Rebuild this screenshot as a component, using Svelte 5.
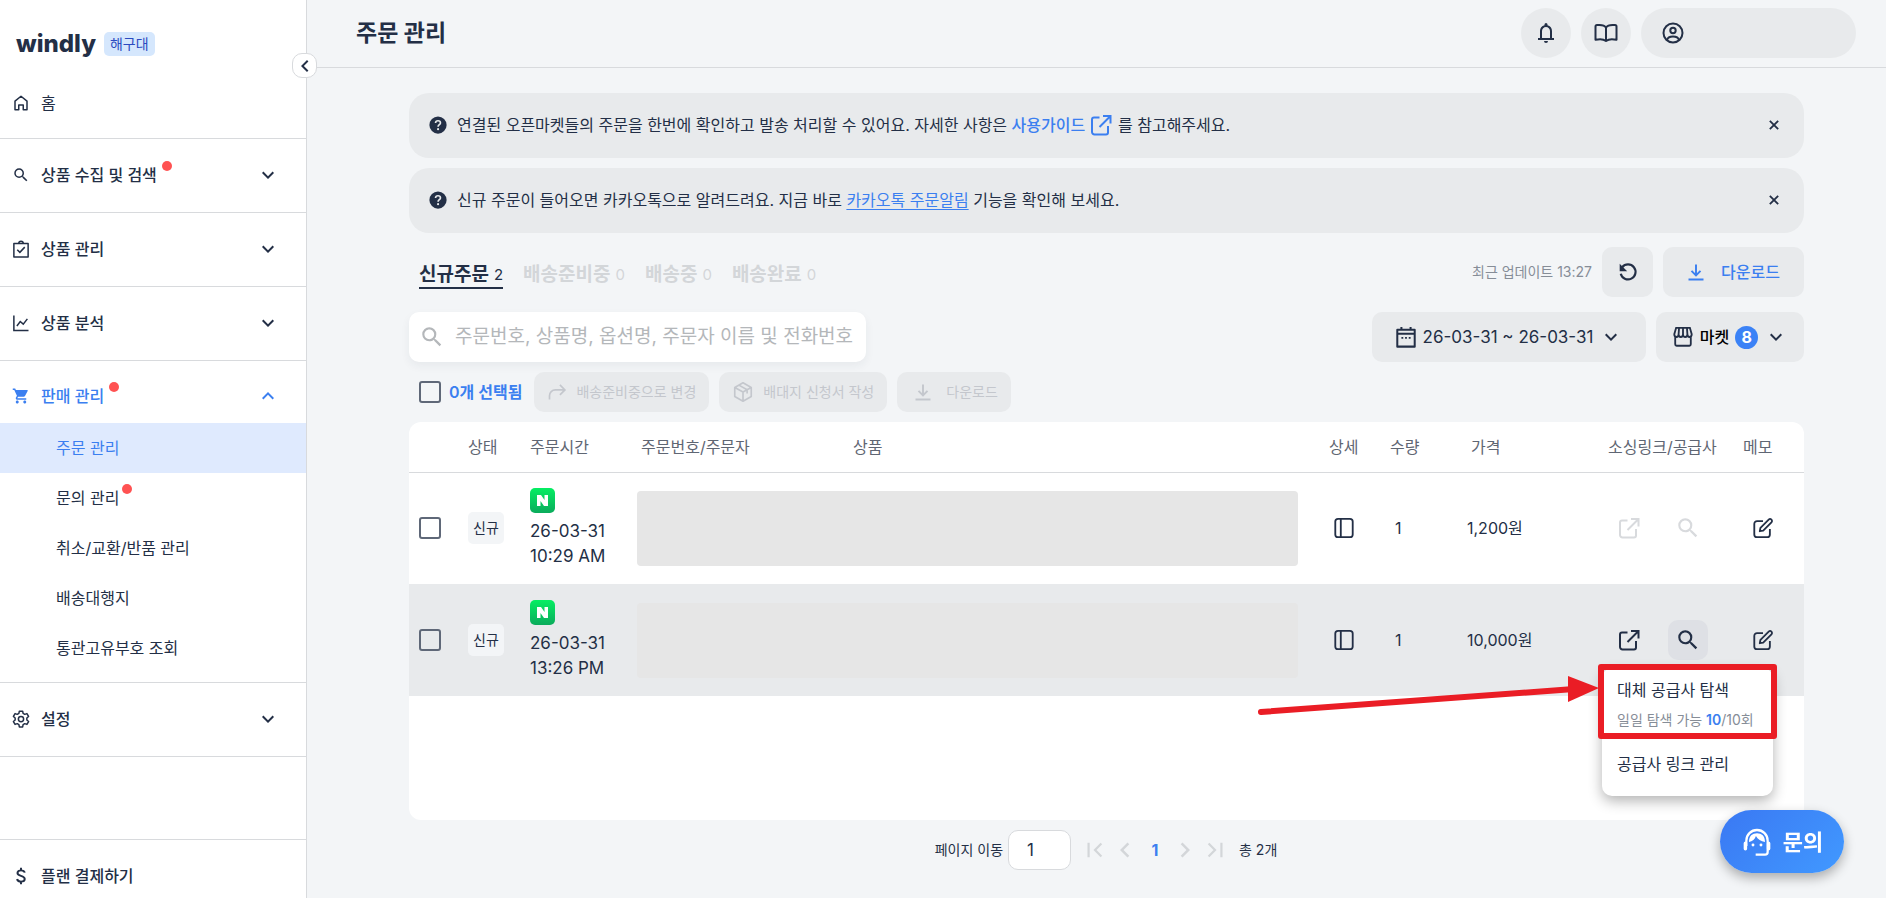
<script lang="ts">
  type MenuGroup = {
    id: string;
    icon: string;
    label: string;
    dot?: boolean;
    open?: boolean;
    children?: { label: string; dot?: boolean; active?: boolean }[];
  };

  const groups: MenuGroup[] = [
    { id: 'collect', icon: 'search', label: '상품 수집 및 검색', dot: true },
    { id: 'product', icon: 'clipboard', label: '상품 관리' },
    { id: 'analysis', icon: 'chart', label: '상품 분석' },
    {
      id: 'sales',
      icon: 'cart',
      label: '판매 관리',
      dot: true,
      open: true,
      children: [
        { label: '주문 관리', active: true },
        { label: '문의 관리', dot: true },
        { label: '취소/교환/반품 관리' },
        { label: '배송대행지' },
        { label: '통관고유부호 조회' },
      ],
    },
    { id: 'settings', icon: 'gear', label: '설정' },
  ];

  const tabs = [
    { label: '신규주문', count: 2 },
    { label: '배송준비중', count: 0 },
    { label: '배송중', count: 0 },
    { label: '배송완료', count: 0 },
  ];

  const orders = [
    { id: 1, date: '26-03-31', time: '10:29 AM', qty: 1, price: '1,200원', sourced: false },
    { id: 2, date: '26-03-31', time: '13:26 PM', qty: 1, price: '10,000원', sourced: true },
  ];

  let activeTab = $state(0);
  let keyword = $state('');
  let page = $state('1');
  let menuFor = $state(2);
  let notices = $state([true, true]);
</script>

{#snippet icon(name: string, size = 24)}
  <svg
    class="icon"
    width={size}
    height={size}
    viewBox="0 0 24 24"
    fill="none"
    stroke="currentColor"
    stroke-width="2"
    aria-hidden="true"
  >
    {#if name === 'search'}
      <path fill="currentColor" stroke="none" d="M15.5 14h-.79l-.28-.27A6.471 6.471 0 0 0 16 9.5 6.5 6.5 0 1 0 9.5 16c1.61 0 3.09-.59 4.23-1.57l.27.28v.79l5 4.99L20.49 19l-4.99-5zm-6 0C7.01 14 5 11.99 5 9.5S7.01 5 9.5 5 14 7.01 14 9.5 11.99 14 9.5 14z" />
    {:else if name === 'home'}
      <path d="M4 21V9.500L12 3l8 6.500V21h-5v-6.500H9V21z" stroke-linejoin="round" />
    {:else if name === 'clipboard'}
      <path d="M2.500 4.500h19v18h-19z" stroke-linejoin="round" />
      <path d="M9 4.500a3 3 0 0 1 6 0" />
      <path d="m7 13 3.500 3.500 6.500-7" />
    {:else if name === 'chart'}
      <path d="M2.500 2v20H22" />
      <path d="m6.500 16 4.500-6 4 3.500 5.500-7" />
    {:else if name === 'cart'}
      <path fill="currentColor" stroke="none" d="M7 18c-1.100 0-1.990.9-1.990 2S5.900 22 7 22s2-.9 2-2-.9-2-2-2zM1 2v2h2l3.600 7.590-1.350 2.450c-.16.28-.25.61-.25.96 0 1.100.9 2 2 2h12v-2H7.420c-.14 0-.25-.11-.25-.25l.03-.12.9-1.630h7.450c.75 0 1.410-.41 1.750-1.030l3.580-6.490A1.003 1.003 0 0 0 20 4H5.210l-.94-2H1zm16 16c-1.100 0-1.990.9-1.990 2s.89 2 1.990 2 2-.9 2-2-.9-2-2-2z" />
    {:else if name === 'gear'}
      <circle cx="12" cy="12" r="3.500" />
      <path d="M9.800 2.500h4.400l.6 3 2.200 1.300 2.900-1 2.200 3.800-2.300 2v2.800l2.300 2-2.200 3.800-2.900-1-2.200 1.300-.6 3H9.800l-.6-3L7 19.200l-2.900 1-2.200-3.800 2.300-2v-2.800l-2.300-2 2.200-3.800 2.900 1 2.200-1.300z" transform="translate(0 -1)" stroke-linejoin="round" />
    {:else if name === 'dollar'}
      <path d="M17 7.500c-.5-2-2.300-3-5-3s-4.700 1.200-4.700 3.500c0 5 9.700 2.500 9.700 8 0 2.300-2 3.500-5 3.500s-4.800-1.200-5.200-3.500M12 1v3.500M12 19.500V23" stroke-width="2.600" />
    {:else if name === 'down'}
      <path fill="currentColor" stroke="none" d="M7.410 8.590 12 13.170l4.590-4.580L18 10l-6 6-6-6z" />
    {:else if name === 'up'}
      <path fill="currentColor" stroke="none" d="M7.410 15.410 12 10.830l4.590 4.580L18 14l-6-6-6 6z" />
    {:else if name === 'left'}
      <path fill="currentColor" stroke="none" d="M15.410 7.410 14 6l-6 6 6 6 1.410-1.410L10.830 12z" />
    {:else if name === 'right'}
      <path fill="currentColor" stroke="none" d="M10 6 8.590 7.410 13.170 12l-4.580 4.590L10 18l6-6z" />
    {:else if name === 'first'}
      <path d="m19 5-7 7 7 7M5 4v16" stroke-width="2.400" />
    {:else if name === 'last'}
      <path d="m5 5 7 7-7 7M19 4v16" stroke-width="2.400" />
    {:else if name === 'bell'}
      <path fill="currentColor" stroke="none" d="M4 19v-2h2v-7c0-2.800 1.700-5.100 4.500-5.800V3.500a1.500 1.500 0 0 1 3 0v.7C16.300 4.900 18 7.200 18 10v7h2v2zm8 3a2 2 0 0 1-2-2h4a2 2 0 0 1-2 2zM8 17h8v-7c0-2.200-1.800-4-4-4s-4 1.800-4 4z" />
    {:else if name === 'book'}
      <path d="M12 6.500C10.800 4.700 8.500 4 5.500 4H3C2 4 1.500 4.500 1.500 5.500v13.300C5.500 17.800 9.500 18 12 20c2.500-2 6.500-2.200 10.500-1.200V5.500c0-1-.5-1.500-1.500-1.500h-2.500c-3 0-5.300.7-6.500 2.500zm0 0V20" stroke-linejoin="round" />
    {:else if name === 'user'}
      <circle cx="12" cy="12" r="9.500" />
      <circle cx="12" cy="9.500" r="2.700" />
      <path d="M6 19c.6-2.500 3-3.500 6-3.500s5.400 1 6 3.500" />
    {:else if name === 'help'}
      <circle cx="12" cy="12" r="11.500" fill="currentColor" stroke="none" />
      <path d="M8.700 9.300C8.800 7.400 10.100 6.300 12 6.300s3.300 1.200 3.300 2.900c0 2.300-3.200 2.600-3.200 5.100" stroke="#e8eaec" stroke-width="2.200" />
      <circle cx="12.100" cy="17.500" r="1.400" fill="#e8eaec" stroke="none" />
    {:else if name === 'close'}
      <path d="m7 7 10 10M17 7 7 17" stroke-width="2.200" />
    {:else if name === 'external'}
      <path d="M10.500 4.500H5A2 2 0 0 0 3 6.500V19a2.500 2.500 0 0 0 2.500 2.500H17a2 2 0 0 0 2-2V13" />
      <path d="M14 3h7.500v7.500M21 3.500 10.500 14" />
    {:else if name === 'refresh'}
      <path d="M5 6.300A9 9 0 1 1 3.300 14" stroke-width="2.600" />
      <path fill="currentColor" stroke="none" d="M2 2v9h9z" />
    {:else if name === 'download'}
      <path d="M12 2v14M6 10.500l6 6 6-6M2 22h20" stroke-width="2.600" />
    {:else if name === 'forward'}
      <path d="M3 21v-4.500a7 7 0 0 1 7-7h11M15.500 3.500l6 6-6 6" />
    {:else if name === 'box'}
      <path d="m12 2 9 5v10l-9 5-9-5V7zM3 7l9 5 9-5M12 12v10M7.500 4.500l9 5v4" stroke-linejoin="round" stroke-width="1.800" />
    {:else if name === 'calendar'}
      <path d="M2.500 4h19v18.500h-19zM2.500 8.500h19M7 1v3M17 1v3" stroke-width="2.200" stroke-linejoin="round" />
      <path d="M7 13h2m2 0h2m2 0h2" />
    {:else if name === 'market'}
      <path d="M4.500 2h15l2 7c0 4-4.700 4-4.700 0 0 4-4.800 4-4.800 0 0 4-4.800 4-4.800 0 0 4-4.700 4-4.700 0zM7.700 2l-.5 7M12 2v7M16.300 2l.5 7M3.500 12v8c0 1 .5 1.500 1.500 1.500h14c1 0 1.500-.5 1.500-1.500v-8" />
    {:else if name === 'panel'}
      <rect x="2.500" y="2" width="19" height="20" rx="3" />
      <path d="M8.500 2v20" />
    {:else if name === 'edit'}
      <path d="M12 4.500H5.500a3 3 0 0 0-3 3V19a3 3 0 0 0 3 3h11a3 3 0 0 0 3-3V13" />
      <path d="m8.500 15.500.7-3.700 9-9a2 2 0 0 1 3 3l-9 9z" stroke-linejoin="round" />
    {:else if name === 'agent'}
      <path d="M4 15V11a8 8 0 0 1 16 0v8.500a2 2 0 0 1-2 2h-7" stroke-width="1.700" />
      <path d="M3.300 13v4M20.700 13v4" stroke-width="2.600" stroke-linecap="round" />
      <path fill="currentColor" stroke="none" d="M6 12c0-4.600 2.500-6.600 6-6.600s6 2 6 6.600c-3-.5-5.500-2-6.800-4.500C10.500 10 8.500 11.500 6 12z" />
      <circle cx="9" cy="14.300" r="1.100" fill="currentColor" stroke="none" />
      <circle cx="15" cy="14.300" r="1.100" fill="currentColor" stroke="none" />
    {/if}
  </svg>
{/snippet}

<div class="app">
  <aside class="sidebar">
    <button class="collapse" aria-label="메뉴 접기">{@render icon('left', 24)}</button>
    <nav class="nav">
      <div class="brand">
        <a class="logo" href="#home">windly</a>
        <span class="plan">해구대</span>
      </div>
      <a class="entry home" href="#home">
        {@render icon('home', 18)}
        <span>홈</span>
      </a>

      {#each groups as group (group.id)}
        <section class="group">
          <button class="entry" class:open={group.open} aria-expanded={!!group.open}>
            {@render icon(group.icon, group.icon === 'search' ? 20 : 18)}
            <span class="with-dot" class:dot={group.dot}>{group.label}</span>
            <span class="arrow">{@render icon(group.open ? 'up' : 'down', 24)}</span>
          </button>
          {#if group.open && group.children}
            <ul class="children">
              {#each group.children as child}
                <li>
                  <a href="#{group.id}" class:active={child.active}>
                    <span class="with-dot near" class:dot={child.dot}>{child.label}</span>
                  </a>
                </li>
              {/each}
            </ul>
          {/if}
        </section>
      {/each}

      <div class="spacer"></div>
      <section class="group">
        <a class="entry" href="#plan">
          {@render icon('dollar', 18)}
          <span>플랜 결제하기</span>
        </a>
      </section>
    </nav>
  </aside>

  <main class="main">
    <header class="topbar">
      <h1>주문 관리</h1>
      <div class="top-actions">
        <button class="round" aria-label="알림">{@render icon('bell', 24)}</button>
        <button class="round" aria-label="가이드">{@render icon('book', 24)}</button>
        <button class="account" aria-label="내 계정">{@render icon('user', 24)}</button>
      </div>
    </header>

    <div class="content">
      <div class="notices">
        {#if notices[0]}
          <div class="notice">
            {@render icon('help', 18)}
            <p>
              연결된 오픈마켓들의 주문을 한번에 확인하고 발송 처리할 수 있어요. 자세한 사항은
              <a class="guide" href="#guide">사용가이드 {@render icon('external', 24)}</a>
              를 참고해주세요.
            </p>
            <button aria-label="닫기" onclick={() => (notices[0] = false)}>{@render icon('close', 20)}</button>
          </div>
        {/if}
        {#if notices[1]}
          <div class="notice">
            {@render icon('help', 18)}
            <p>
              신규 주문이 들어오면 카카오톡으로 알려드려요. 지금 바로
              <a href="#kakao">카카오톡 주문알림</a> 기능을 확인해 보세요.
            </p>
            <button aria-label="닫기" onclick={() => (notices[1] = false)}>{@render icon('close', 20)}</button>
          </div>
        {/if}
      </div>

      <div class="row tabs-row">
        <div class="tabs" role="tablist">
          {#each tabs as tab, i}
            <button role="tab" class:active={activeTab === i} aria-selected={activeTab === i} onclick={() => (activeTab = i)}>
              {tab.label}<span>{tab.count}</span>
            </button>
          {/each}
        </div>
        <div class="side">
          <span class="updated">최근 업데이트 13:27</span>
          <button class="box refresh" aria-label="새로고침">{@render icon('refresh', 20)}</button>
          <button class="box export">{@render icon('download', 18)}다운로드</button>
        </div>
      </div>

      <div class="row">
        <label class="search">
          {@render icon('search', 26)}
          <input
            type="text"
            bind:value={keyword}
            aria-label="주문 검색"
            placeholder="주문번호, 상품명, 옵션명, 주문자 이름 및 전화번호"
          />
        </label>
        <div class="side">
          <button class="box period">
            {@render icon('calendar', 22)}26-03-31 ~ 26-03-31{@render icon('down', 24)}
          </button>
          <button class="box market">
            {@render icon('market', 22)}<span>마켓</span><b>8</b>{@render icon('down', 24)}
          </button>
        </div>
      </div>

      <div class="bulk">
        <label><input type="checkbox" />0개 선택됨</label>
        <button disabled>{@render icon('forward', 20)}배송준비중으로 변경</button>
        <button disabled>{@render icon('box', 22)}배대지 신청서 작성</button>
        <button class="wide" disabled>{@render icon('download', 18)}다운로드</button>
      </div>

      <div class="sheet">
        <table>
          <colgroup>
            <col class="c-check" /><col class="c-state" /><col class="c-time" /><col class="c-no" /><col />
            <col class="c-detail" /><col class="c-qty" /><col class="c-price" /><col class="c-source" /><col class="c-memo" />
          </colgroup>
          <thead>
            <tr>
              <th></th>
              <th>상태</th>
              <th>주문시간</th>
              <th class="inset">주문번호/주문자</th>
              <th class="inset">상품</th>
              <th>상세</th>
              <th>수량</th>
              <th class="inset">가격</th>
              <th>소싱링크/공급사</th>
              <th>메모</th>
            </tr>
          </thead>
          <tbody>
            {#each orders as order (order.id)}
              <tr class:selected={menuFor === order.id}>
                <td class="check"><input type="checkbox" aria-label="주문 {order.id} 선택" /></td>
                <td><span class="state">신규</span></td>
                <td class="time">
                  <svg width="25" height="25" viewBox="0 0 25 25" aria-hidden="true">
                    <defs>
                      <linearGradient id="naver{order.id}" x1="0" y1="0" x2="0" y2="1">
                        <stop offset="0" stop-color="#05ee62" />
                        <stop offset="1" stop-color="#0bab5c" />
                      </linearGradient>
                    </defs>
                    <rect width="25" height="25" rx="5" fill="url(#naver{order.id})" />
                    <path d="M7 7h4l3.500 5V7h3.500v11h-4l-3.500-5v5H7z" fill="#fff" />
                  </svg>
                  <span>{order.date}</span>
                  <span>{order.time}</span>
                </td>
                <td colspan="2"><div class="masked"></div></td>
                <td><button class="tool" aria-label="상세 보기">{@render icon('panel', 22)}</button></td>
                <td class="qty">{order.qty}</td>
                <td>{order.price}</td>
                <td>
                  <div class="tools">
                    <button class="tool" aria-label="소싱링크" disabled={!order.sourced}>{@render icon('external', 24)}</button>
                    <div class="supplier">
                      <button
                        class="tool"
                        class:on={menuFor === order.id}
                        aria-label="공급사"
                        disabled={!order.sourced}
                        onclick={() => (menuFor = menuFor === order.id ? 0 : order.id)}
                      >
                        {@render icon('search', 26)}
                      </button>
                      {#if menuFor === order.id}
                        <div class="menu">
                          <button>
                            대체 공급사 탐색
                            <small>일일 탐색 가능 <b>10</b>/10회</small>
                          </button>
                          <button>공급사 링크 관리</button>
                          <div class="mark"></div>
                          <svg class="pointer" width="344" height="44" viewBox="0 0 344 44" aria-hidden="true">
                            <path d="M5 38 318 15" stroke="#ea1d25" stroke-width="6" stroke-linecap="round" />
                            <path d="M312 2v26l31-14z" fill="#ea1d25" />
                          </svg>
                        </div>
                      {/if}
                    </div>
                  </div>
                </td>
                <td><button class="tool memo" aria-label="메모">{@render icon('edit', 22)}</button></td>
              </tr>
            {/each}
          </tbody>
        </table>
      </div>

      <footer class="pager">
        <label>페이지 이동 <input type="text" bind:value={page} /></label>
        <div class="pages">
          <button aria-label="처음" disabled>{@render icon('first', 22)}</button>
          <button aria-label="이전" disabled>{@render icon('left', 30)}</button>
          <button class="current">1</button>
          <button aria-label="다음" disabled>{@render icon('right', 30)}</button>
          <button aria-label="마지막" disabled>{@render icon('last', 22)}</button>
        </div>
        <span>총 2개</span>
      </footer>
    </div>
  </main>

  <button class="inquiry">{@render icon('agent', 32)}문의</button>
</div>

<style>
  :global(body) {
    background: #f3f5f7;
  }

  .app {
    --ink: #232f46;
    --blue: #3b7ff0;
    --gray: #e8eaec;
    --line: #d8dadd;
    display: flex;
    height: 100vh;
    overflow: hidden;
    background: #f3f5f7;
    color: var(--ink);
    font-family: Inter, 'Noto Sans CJK KR', sans-serif;
    font-size: 16px;
    line-height: 24px;
  }

  .app :global(*) {
    box-sizing: border-box;
  }

  button,
  input {
    font: inherit;
    color: inherit;
  }

  button {
    display: flex;
    align-items: center;
    padding: 0;
    border: 0;
    background: none;
    cursor: pointer;
  }

  a {
    color: inherit;
    text-decoration: none;
  }

  .icon {
    display: block;
    flex: none;
  }

  /* sidebar */
  .sidebar {
    position: relative;
    flex: none;
    width: 307px;
    border-right: 1px solid var(--line);
    background: #fff;
  }

  .nav {
    display: flex;
    flex-direction: column;
    height: 100%;
    overflow-y: auto;
    scrollbar-width: none;
  }

  .collapse {
    position: absolute;
    top: 53px;
    right: -11px;
    z-index: 2;
    justify-content: center;
    width: 25px;
    height: 25px;
    border: 1px solid var(--line);
    border-radius: 10px;
    background: #fff;
  }

  .brand {
    display: flex;
    align-items: center;
    gap: 8px;
    padding: 32px 16px 0;
  }

  .logo {
    font-size: 24px;
    font-weight: 800;
    line-height: 24px;
  }

  .plan {
    padding: 0 6px;
    border-radius: 5px;
    background: #d5e7fd;
    color: #2b4ac0;
    font-size: 14px;
  }

  .entry {
    display: flex;
    align-items: center;
    flex: none;
    gap: 11px;
    width: 100%;
    height: 73px;
    padding: 0 26px 2px 12px;
    font-weight: 500;
    text-align: left;
  }

  .entry > .icon {
    width: 18px;
  }

  .home {
    height: 68px;
    margin-top: 14px;
    font-weight: 400;
  }

  .entry.open {
    height: 62px;
    padding-top: 9px;
    color: var(--blue);
  }

  .arrow {
    margin-left: auto;
  }

  .group {
    flex: none;
    border-top: 1px solid var(--line);
  }

  .spacer {
    flex: none;
    height: 83px;
    border-top: 1px solid var(--line);
  }

  .with-dot {
    position: relative;
  }

  .dot::after {
    content: '';
    position: absolute;
    top: -2px;
    right: -15px;
    width: 10px;
    height: 10px;
    border-radius: 50%;
    background: #ff5252;
  }

  .near.dot::after {
    right: -13px;
  }

  .children {
    margin: 0;
    padding: 0 0 9px;
    list-style: none;
  }

  .children a {
    display: flex;
    align-items: center;
    height: 50px;
    padding-left: 56px;
  }

  .children a.active {
    background: #dfeafe;
    color: var(--blue);
  }

  /* header */
  .main {
    flex: 1;
    min-width: 0;
    overflow-y: auto;
    scrollbar-width: none;
  }

  .topbar {
    display: flex;
    align-items: center;
    justify-content: space-between;
    height: 68px;
    padding: 0 30px 2px 49px;
    border-bottom: 1px solid var(--line);
  }

  h1 {
    margin: 0;
    font-size: 23px;
    font-weight: 700;
    line-height: 32px;
  }

  .top-actions {
    display: flex;
    gap: 10px;
  }

  .round {
    justify-content: center;
    width: 50px;
    height: 50px;
    border-radius: 50%;
    background: var(--gray);
  }

  .account {
    width: 215px;
    height: 50px;
    padding-left: 20px;
    border-radius: 25px;
    background: var(--gray);
  }

  .content {
    padding: 25px 82px 28px 102px;
  }

  .notices {
    display: flex;
    flex-direction: column;
    gap: 10px;
  }

  .notice {
    display: flex;
    align-items: center;
    gap: 10px;
    height: 65px;
    padding: 0 20px 2px;
    border-radius: 20px;
    background: var(--gray);
  }

  .notice p {
    flex: 1;
    margin: 0;
  }

  .notice a {
    color: var(--blue);
    text-decoration: underline;
    text-underline-offset: 3px;
  }

  .notice a.guide {
    font-weight: 500;
    text-decoration: none;
  }

  .guide .icon {
    display: inline-block;
    vertical-align: -6px;
  }

  /* tool rows */
  .row {
    display: flex;
    align-items: center;
    justify-content: space-between;
  }

  .tabs-row {
    margin: 14px 0 15px;
  }

  .tabs {
    display: flex;
    gap: 20px;
    padding: 4px 10px 0;
  }

  .tabs button {
    gap: 5px;
    height: 30px;
    padding-top: 4px;
    border-bottom: 2px solid transparent;
    color: #d3d6d9;
    font-size: 19px;
    font-weight: 700;
  }

  .tabs button span {
    font-size: 15px;
    font-weight: 400;
  }

  .tabs .active {
    border-color: var(--ink);
    color: var(--ink);
  }

  .side {
    display: flex;
    align-items: center;
    gap: 10px;
  }

  .updated {
    color: #868d97;
    font-size: 14px;
  }

  .box {
    justify-content: center;
    height: 50px;
    border-radius: 10px;
    background: var(--gray);
  }

  .refresh {
    width: 51px;
  }

  .export {
    gap: 16px;
    width: 141px;
    color: var(--blue);
    font-weight: 500;
  }

  .period {
    gap: 6px;
    width: 274px;
    font-size: 17px;
  }

  .market {
    gap: 6px;
    width: 148px;
  }

  .market span {
    color: #000;
    font-weight: 500;
  }

  .market b {
    width: 23px;
    height: 23px;
    border-radius: 50%;
    background: #3b82f6;
    color: #fff;
    line-height: 23px;
  }

  .search {
    display: flex;
    align-items: center;
    gap: 10px;
    width: 457px;
    height: 50px;
    padding: 0 10px;
    border-radius: 10px;
    background: #fff;
    box-shadow: 0 4px 10px rgba(35, 47, 70, 0.06);
    color: #b4b7ba;
  }

  .search input {
    flex: 1;
    min-width: 0;
    padding: 0;
    border: 0;
    outline: 0;
    background: none;
    color: var(--ink);
    font-size: 19px;
  }

  .search input::placeholder {
    color: #b4b7ba;
    opacity: 1;
  }

  input[type='checkbox'] {
    appearance: none;
    display: block;
    flex: none;
    width: 22px;
    height: 22px;
    margin: 0;
    border: 2px solid #5f6878;
    border-radius: 3px;
  }

  input[type='checkbox']:checked {
    background: var(--blue);
  }

  .bulk {
    display: flex;
    gap: 10px;
    margin: 10px 0;
    padding-left: 10px;
  }

  .bulk label {
    display: flex;
    align-items: center;
    gap: 8px;
    padding-right: 2px;
    color: var(--blue);
    font-weight: 600;
  }

  .bulk button {
    gap: 9px;
    height: 40px;
    padding: 0 13px;
    border-radius: 10px;
    background: var(--gray);
    color: #c4c7cd;
    font-size: 14px;
  }

  .bulk .wide {
    gap: 14px;
    padding: 0 13px 0 17px;
  }

  /* table */
  .sheet {
    min-height: 398px;
    border-radius: 12px;
    background: #fff;
  }

  table {
    width: 100%;
    border-collapse: collapse;
    table-layout: fixed;
  }

  .c-check { width: 59px; }
  .c-state { width: 62px; }
  .c-time { width: 107px; }
  .c-no { width: 212px; }
  .c-detail { width: 61px; }
  .c-qty { width: 77px; }
  .c-price { width: 141px; }
  .c-source { width: 135px; }
  .c-memo { width: 61px; }

  th {
    height: 50px;
    padding: 0;
    border-bottom: 1px solid var(--line);
    color: #5f6673;
    font-weight: 400;
    text-align: left;
    white-space: nowrap;
  }

  th.inset {
    padding-left: 4px;
  }

  td {
    height: 112px;
    padding: 0;
  }

  .selected td {
    background: var(--gray);
  }

  .check {
    padding-left: 10px;
  }

  .state {
    display: inline-block;
    padding: 4px 5px;
    border-radius: 5px;
    background: #f3f5f7;
    font-size: 14px;
  }

  .time svg {
    display: block;
    margin-bottom: 6px;
  }

  .time span {
    display: block;
    font-size: 17px;
    line-height: 25px;
  }

  .masked {
    height: 75px;
    margin-right: 31px;
    border-radius: 4px;
    background: #e6e6e6;
  }

  .qty {
    padding-left: 5px;
  }

  .tool {
    justify-content: center;
    width: 30px;
    height: 40px;
  }

  .tools {
    display: flex;
    align-items: center;
    gap: 24px;
    padding-left: 6px;
  }

  .supplier {
    position: relative;
  }

  .supplier .tool {
    width: 40px;
  }

  .tool.on {
    border-radius: 10px;
    background: #dee0e5;
  }

  .tool:disabled {
    color: #d8dadd;
  }

  .memo {
    width: 40px;
  }

  .menu {
    position: absolute;
    top: 48px;
    left: -66px;
    z-index: 3;
    width: 171px;
    height: 128px;
    padding: 4px 0;
    border-radius: 10px;
    background: #fff;
    box-shadow: 0 5px 14px rgba(0, 0, 0, 0.3);
  }

  .menu button {
    flex-direction: column;
    align-items: flex-start;
    gap: 6px;
    width: 100%;
    padding: 6px 15px 14px;
    white-space: nowrap;
  }

  .menu small {
    color: #868d97;
    font-size: 14px;
  }

  .menu small b {
    color: var(--blue);
    font-weight: 600;
  }

  .mark {
    position: absolute;
    top: -4px;
    left: -4px;
    width: 179px;
    height: 75px;
    border: 6px solid #ea1d25;
    border-radius: 3px;
    pointer-events: none;
  }

  .pointer {
    position: absolute;
    top: 6px;
    right: 173px;
    fill: none;
    pointer-events: none;
  }

  /* footer */
  .pager {
    display: flex;
    align-items: center;
    justify-content: center;
    gap: 12px;
    margin-top: 10px;
    padding-right: 1px;
    font-size: 14px;
  }

  .pager label {
    display: flex;
    align-items: center;
    gap: 5px;
  }

  .pager input {
    width: 63px;
    height: 40px;
    padding: 0 18px;
    border: 1px solid var(--line);
    border-radius: 10px;
    background: #fff;
    font-size: 17px;
  }

  .pages {
    display: flex;
    align-items: center;
    gap: 6px;
  }

  .pages button {
    justify-content: center;
    width: 24px;
    height: 24px;
    color: #d3d6d9;
  }

  .pages .current {
    color: var(--blue);
    font-size: 16px;
    font-weight: 700;
  }

  .inquiry {
    position: fixed;
    right: 42px;
    bottom: 25px;
    z-index: 4;
    justify-content: center;
    gap: 10px;
    width: 124px;
    height: 63px;
    border-radius: 32px;
    background: linear-gradient(135deg, #3a78f3, #4199ff);
    box-shadow: 0 5px 12px rgba(0, 0, 0, 0.3);
    color: #fff;
    font-size: 22px;
    font-weight: 700;
  }
</style>
